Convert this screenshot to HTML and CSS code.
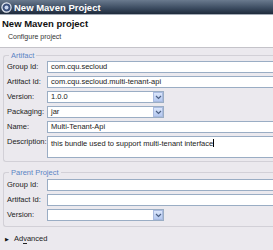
FILE: index.html
```html
<html lang="en">
<head>
  <meta charset="UTF-8" />
  <title>New Maven Project</title>
  <link rel="stylesheet" href="styles.css">
</head>
<body>
  <div class="titlebar">
    <svg class="app-icon" width="11" height="11" viewBox="0 0 11 11">
      <circle cx="5.5" cy="5.5" r="4.6" fill="#3a4f7a" stroke="#e8ecf4" stroke-width="1.2"/>
      <circle cx="5.5" cy="5.5" r="2" fill="#c9d6ee"/>
    </svg>
    <span>New Maven Project</span>
  </div>

  <div class="banner">
    <div class="banner-title">New Maven project</div>
    <div class="banner-sub">Configure project</div>
  </div>

  <div class="page">
    <fieldset class="group">
      <legend>Artifact</legend>
      <div class="row"><label>Group Id:</label><div class="field">com.cqu.secloud</div></div>
      <div class="row"><label>Artifact Id:</label><div class="field">com.cqu.secloud.multi-tenant-api</div></div>
      <div class="row"><label>Version:</label><div class="combo"><div class="combo-text">1.0.0</div><div class="combo-btn"><svg width="7" height="5" viewBox="0 0 7 5"><path d="M1 1 L3.5 3.5 L6 1" fill="none" stroke="#4d6185" stroke-width="1.2"/></svg></div></div></div>
      <div class="row"><label>Packaging:</label><div class="combo"><div class="combo-text">jar</div><div class="combo-btn"><svg width="7" height="5" viewBox="0 0 7 5"><path d="M1 1 L3.5 3.5 L6 1" fill="none" stroke="#4d6185" stroke-width="1.2"/></svg></div></div></div>
      <div class="row"><label>Name:</label><div class="field">Multi-Tenant-Api</div></div>
      <div class="row"><label>Description:</label><div class="field area">this bundle used to support multi-tenant interface<span class="caret"></span></div></div>
    </fieldset>

    <fieldset class="group parent">
      <legend>Parent Project</legend>
      <div class="row"><label>Group Id:</label><div class="field"></div></div>
      <div class="row"><label>Artifact Id:</label><div class="field"></div></div>
      <div class="row"><label>Version:</label><div class="combo"><div class="combo-text"></div><div class="combo-btn"><svg width="7" height="5" viewBox="0 0 7 5"><path d="M1 1 L3.5 3.5 L6 1" fill="none" stroke="#4d6185" stroke-width="1.2"/></svg></div></div></div>
    </fieldset>

    <div class="advanced"><span class="arrow">&#9654;</span><span>Ad<u>v</u>anced</span></div>
  </div>
</body>
</html>
```

FILE: styles.css
```css
body {
  margin: 0;
  width: 273px;
  height: 250px;
  overflow: hidden;
  font-family: "Liberation Sans", Arial, sans-serif;
  font-size: 7.5px;
  color: #222;
  background-color: #ebe9ee;
}

.titlebar {
  height: 14px;
  display: flex;
  align-items: center;
  gap: 2px;
  padding-left: 1px;
  background: linear-gradient(#6a7a8e, #3e4e63 55%, #1e2a3b);
  border-bottom: 1px solid #a3abb6;
  color: white;
  font-weight: bold;
  font-size: 9.5px;
}

.banner {
  height: 32px;
  background-color: #fff;
  border-bottom: 1px solid #c4c3c9;
  padding-left: 2px;
}

.banner-title {
  padding-top: 4px;
  font-weight: bold;
  font-size: 9.5px;
  line-height: 10px;
  color: #111;
}

.banner-sub {
  margin-top: 4px;
  padding-left: 6px;
  font-size: 7px;
  line-height: 8px;
  color: #333;
}

.page {
  padding-top: 3px;
}

.group {
  margin: 0 0 0 3px;
  padding: 1px 0 3px 3px;
  border: 1px solid #d2d0d7;
  border-right: none;
  border-radius: 3px 0 0 3px;
}

.group legend {
  padding: 0 2px;
  margin-left: 2px;
  font-size: 7.5px;
  line-height: 9px;
  color: #5b85c4;
}

.parent {
  margin-top: 6px;
  padding-top: 2px;
  padding-bottom: 5px;
}

.row {
  display: flex;
  align-items: flex-start;
  margin-bottom: 3px;
}

.row:last-child {
  margin-bottom: 0;
}

.row label {
  width: 40px;
  flex: none;
  line-height: 12px;
  white-space: nowrap;
}

.field {
  flex: 1;
  height: 12px;
  box-sizing: border-box;
  border: 1px solid #9aadc4;
  border-right: none;
  background-color: #fff;
  padding-left: 3px;
  line-height: 10px;
  white-space: nowrap;
  overflow: hidden;
}

.area {
  height: 22px;
  line-height: 11px;
  padding-top: 1px;
}

.caret {
  display: inline-block;
  width: 1px;
  height: 8px;
  background-color: #000;
  vertical-align: -1px;
}

.combo {
  width: 117px;
  height: 12px;
  box-sizing: border-box;
  border: 1px solid #9aadc4;
  background-color: #fff;
  display: flex;
}

.combo-text {
  flex: 1;
  padding-left: 3px;
  line-height: 10px;
}

.combo-btn {
  width: 10px;
  box-sizing: border-box;
  border: 1px solid #aabbe0;
  background: linear-gradient(#dbe6fb, #b4c8f0);
  display: flex;
  align-items: center;
  justify-content: center;
}

.advanced {
  margin-top: 7px;
  padding-left: 5px;
  display: flex;
  align-items: center;
  gap: 5px;
  line-height: 10px;
}

.advanced .arrow {
  font-size: 5px;
  color: #111;
}

.advanced u {
  text-decoration: none;
  border-bottom: 1px solid #222;
}
```
